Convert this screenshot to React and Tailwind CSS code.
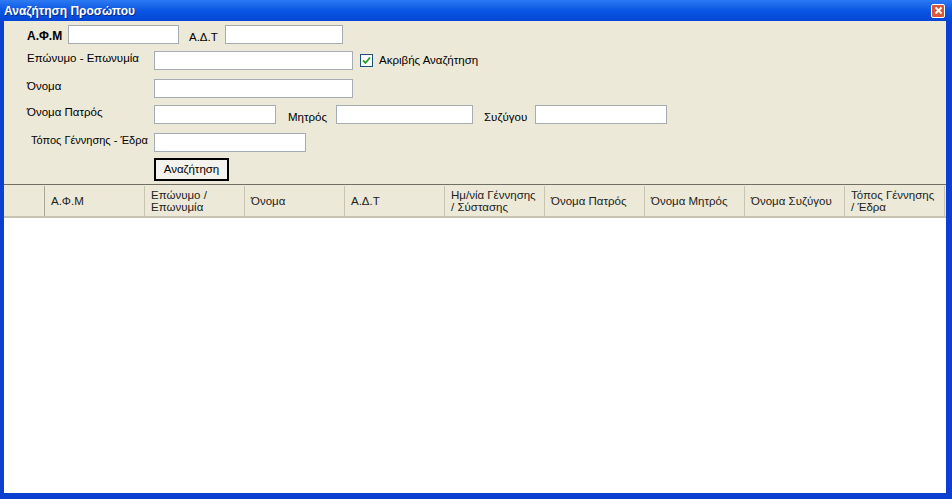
import React from 'react'

// Παράθυρο αναζήτησης προσώπου σε στυλ Windows XP
const font = { fontFamily: '"Liberation Sans", Arial, sans-serif' }

function Field({ w }) {
  return <div className={`h-[19px] bg-white border border-[#a5acb2] ${w}`} />
}

const columns = [
  'Α.Φ.Μ',
  'Επώνυμο / Επωνυμία',
  'Όνομα',
  'Α.Δ.Τ',
  'Ημ/νία Γέννησης / Σύστασης',
  'Όνομα Πατρός',
  'Όνομα Μητρός',
  'Όνομα Συζύγου',
  'Τόπος Γέννησης / Έδρα',
]

export default function App() {
  return (
    <div className="w-[952px] h-[499px] bg-[#0a3fd0] flex flex-col overflow-hidden text-[11.5px] text-black" style={font}>
      {/* Μπάρα τίτλου */}
      <div className="h-[21px] shrink-0 flex items-center justify-between pl-[4px] pr-[7px] bg-gradient-to-b from-[#2d7af3] via-[#0a56e4] to-[#0546d6]">
        <span className="text-white font-bold text-[12px]" style={{ textShadow: '1px 1px 0 #0a2a8a' }}>
          Αναζήτηση Προσώπου
        </span>
        <div className="w-[14px] h-[14px] rounded-[2px] border border-white bg-[#d9583a] flex items-center justify-center">
          <svg width="9" height="9" viewBox="0 0 9 9">
            <path d="M1.5 1.5 L7.5 7.5 M7.5 1.5 L1.5 7.5" stroke="white" strokeWidth="1.8" />
          </svg>
        </div>
      </div>

      <div className="flex-1 flex flex-col ml-[4px] mr-[6px] mb-[6px] min-h-0">
        {/* Φόρμα */}
        <div className="bg-[#ece9d8] pt-[4px] pl-[23px] pb-[3px] flex flex-col shrink-0 whitespace-nowrap">
          <div className="flex items-center h-[19px]">
            <span className="w-[41px] font-bold text-[12px] pt-[2px]">Α.Φ.Μ</span>
            <Field w="w-[111px]" />
            <span className="ml-[10px] w-[36px] pt-[6px]">Α.Δ.Τ</span>
            <Field w="w-[118px]" />
          </div>

          <div className="flex items-center h-[19px] mt-[7px]">
            <span className="w-[127px] self-start -mt-[1px]">Επώνυμο - Επωνυμία</span>
            <Field w="w-[199px]" />
            <div className="ml-[7px] w-[13px] h-[13px] border border-[#1c5180] bg-white flex items-center justify-center">
              <svg width="9" height="9" viewBox="0 0 9 9">
                <path d="M1 4.5 L3.5 7 L8 1.5" fill="none" stroke="#21a121" strokeWidth="1.8" />
              </svg>
            </div>
            <span className="ml-[6px]">Ακριβής Αναζήτηση</span>
          </div>

          <div className="flex items-center h-[19px] mt-[9px]">
            <span className="w-[127px] self-start -mt-[1px]">Όνομα</span>
            <Field w="w-[199px]" />
          </div>

          <div className="flex items-center h-[19px] mt-[7px]">
            <span className="w-[127px] self-start -mt-[1px]">Όνομα Πατρός</span>
            <Field w="w-[122px]" />
            <span className="ml-[12px] w-[48px] pt-[7px]">Μητρός</span>
            <Field w="w-[137px]" />
            <span className="ml-[11px] w-[51px] pt-[7px]">Συζύγου</span>
            <Field w="w-[132px]" />
          </div>

          <div className="flex items-center h-[19px] mt-[9px]">
            <span className="w-[127px] pl-[4px] self-start -mt-[1px] text-[11px]">Τόπος Γέννησης - Έδρα</span>
            <Field w="w-[152px]" />
          </div>

          <div className="flex mt-[6px] pl-[127px]">
            <button className="w-[75px] h-[23px] border-2 border-black bg-[#f4f3ee] text-[11.5px] flex items-center justify-center" style={font}>
              Αναζήτηση
            </button>
          </div>
        </div>

        {/* Πλέγμα αποτελεσμάτων */}
        <div className="flex-1 bg-white border-t border-[#716f64] flex flex-col min-h-0">
          <div className="flex h-[33px] bg-[#ece9d8] border-b-2 border-[#c7c5b2] pt-[1px]">
            <div className="w-[41px] border-r border-[#aca899]" />
            {columns.map((c) => (
              <div key={c} className="w-[100px] border-r border-[#c7c5b2] flex items-center pl-[6px] pr-[4px] leading-[12px] text-[#222]">
                {c}
              </div>
            ))}
          </div>
        </div>
      </div>
    </div>
  )
}
